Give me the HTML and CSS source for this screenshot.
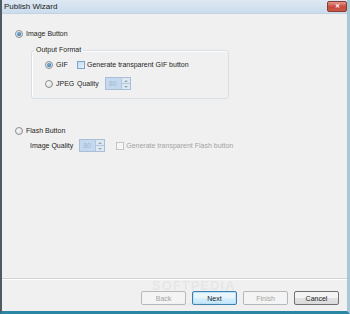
FILE: index.html
```html
<!DOCTYPE html>
<html lang="en">
<head>
    <meta charset="UTF-8">
    <title>Publish Wizard</title>
    <link rel="stylesheet" href="styles.css">
</head>
<body>
    <div class="window">
        <div class="titlebar">
            <span class="title">Publish Wizard</span>
            <span class="close">&#x2715;</span>
        </div>

        <div class="content">
            <div class="row">
                <span class="radio checked"></span>
                <span>Image Button</span>
            </div>

            <fieldset class="group">
                <legend>Output Format</legend>
                <div class="group-inner">
                    <div class="row">
                        <span class="radio checked"></span>
                        <span class="opt-label">GIF</span>
                        <span class="check"></span>
                        <span>Generate transparent GIF button</span>
                    </div>
                    <div class="row row-spin">
                        <span class="radio"></span>
                        <span class="opt-label">JPEG</span>
                        <span class="quality-label">Quality</span>
                        <span class="spin">
                            <span class="spin-value">80</span>
                            <span class="spin-arrows">
                                <span class="arrow up"></span>
                                <span class="arrow down"></span>
                            </span>
                        </span>
                    </div>
                </div>
            </fieldset>

            <div class="row flash-row">
                <span class="radio"></span>
                <span>Flash Button</span>
            </div>

            <div class="row row-spin quality-row">
                <span class="quality-label">Image Quality</span>
                <span class="spin">
                    <span class="spin-value">80</span>
                    <span class="spin-arrows">
                        <span class="arrow up"></span>
                        <span class="arrow down"></span>
                    </span>
                </span>
                <span class="check disabled"></span>
                <span class="muted">Generate transparent Flash button</span>
            </div>
        </div>

        <div class="separator"></div>

        <div class="footer">
            <button class="btn" disabled>Back</button>
            <button class="btn default">Next</button>
            <button class="btn" disabled>Finish</button>
            <button class="btn">Cancel</button>
            <div class="watermark">SOFTPEDIA<small>www.softpedia.com</small></div>
        </div>
    </div>
</body>
</html>
```

FILE: styles.css
```css
:root {
    --face: #f0f0f0;
    --text: #1e1e1e;
    --muted: #a3a3a3;
    --spin-bg: #c4d9ef;
}

html, body {
    margin: 0;
    padding: 0;
}

body {
    width: 350px;
    height: 314px;
    overflow: hidden;
    font-family: 'Liberation Sans', Arial, sans-serif;
    font-size: 7px;
    color: var(--text);
    background: var(--face);
}

.window {
    position: relative;
    width: 350px;
    height: 314px;
    box-sizing: border-box;
    display: flex;
    flex-direction: column;
    background: var(--face);
    border-left: 2px solid #4e5c62;
    border-right: 3px solid #a9c7d9;
    border-bottom: 3px solid #2a86a3;
}

.titlebar {
    height: 14px;
    display: flex;
    align-items: center;
    justify-content: space-between;
    padding: 0 0 0 2px;
    background: linear-gradient(#dde8f3, #ccdcec);
    border-bottom: 1px solid #c2d3e3;
    box-sizing: border-box;
}

.title {
    font-size: 8px;
    color: #1a1a1a;
}

.close {
    width: 18px;
    height: 9px;
    margin-top: -1px;
    border: 1px solid #8a3a33;
    border-radius: 2px;
    background: linear-gradient(#e39a8c, #c8493c 55%, #c65a48);
    color: #fff;
    font-size: 6px;
    font-weight: bold;
    line-height: 9px;
    text-align: center;
}

.content {
    flex: 1;
    padding: 16px 0 0 13px;
}

.row {
    display: flex;
    align-items: center;
    height: 8px;
    line-height: 8px;
    white-space: nowrap;
}

.row-spin {
    height: 13px;
}

.radio {
    width: 6px;
    height: 6px;
    margin-right: 3px;
    border: 1px solid #8c8f94;
    border-radius: 50%;
    background: radial-gradient(circle at 35% 35%, #fbfbfb, #d4d4d4);
    display: flex;
    align-items: center;
    justify-content: center;
    flex: none;
}

.radio.checked::after {
    content: "";
    width: 4px;
    height: 4px;
    border-radius: 50%;
    background: radial-gradient(circle at 40% 40%, #6fb4e6, #1b5b94);
}

.group {
    width: 198px;
    margin: 8px 0 0 16px;
    padding: 0;
    box-sizing: border-box;
    border: 1px solid #d5dfe5;
    border-radius: 3px;
    box-shadow: inset 1px 1px 0 #fff;
}

.group legend {
    margin-left: 2px;
    padding: 0 2px;
    line-height: 8px;
}

.group-inner {
    padding: 7px 0 8px 13px;
}

.group-inner .row-spin {
    margin-top: 8px;
}

.opt-label {
    width: 21px;
}

.check {
    width: 6px;
    height: 6px;
    margin-right: 2px;
    border: 1px solid #7fa6c6;
    background: linear-gradient(135deg, #bfdcf4, #e6f2fb);
    flex: none;
}

.check.disabled {
    border-color: #c5c5c5;
    background: #f6f6f6;
}

.quality-label {
    margin-right: 6px;
}

.spin {
    width: 26px;
    height: 13px;
    box-sizing: border-box;
    display: flex;
    border: 1px solid #a9bfd8;
    background: var(--spin-bg);
}

.spin-value {
    flex: 1;
    padding-left: 3px;
    color: #9fb7d1;
    line-height: 11px;
}

.spin-arrows {
    width: 8px;
    display: flex;
    flex-direction: column;
    border-left: 1px solid #b3c6da;
}

.arrow {
    flex: 1;
    display: flex;
    align-items: center;
    justify-content: center;
    background: #dde8f2;
}

.arrow.up {
    border-bottom: 1px solid #b3c6da;
}

.arrow::after {
    content: "";
    border-left: 2px solid transparent;
    border-right: 2px solid transparent;
}

.arrow.up::after {
    border-bottom: 2px solid #9aa9b8;
}

.arrow.down::after {
    border-top: 2px solid #9aa9b8;
}

.flash-row {
    margin-top: 28px;
}

.quality-row {
    margin: 4px 0 0 15px;
}

.quality-row .check {
    margin-left: 11px;
}

.muted {
    color: var(--muted);
}

.separator {
    height: 1px;
    background: #d3d3d3;
    border-bottom: 1px solid #fff;
}

.footer {
    position: relative;
    display: flex;
    justify-content: flex-end;
    gap: 6px;
    padding: 11px 8px 6px 0;
}

.btn {
    width: 45px;
    height: 14px;
    padding: 0;
    font-family: inherit;
    font-size: 7px;
    color: var(--text);
    border: 1px solid #707070;
    border-radius: 2px;
    background: linear-gradient(#f4f4f4 50%, #e2e2e2 50%, #dadada);
}

.btn:disabled {
    color: var(--muted);
    border-color: #b4b8bb;
    background: #f4f4f4;
}

.btn.default {
    border-color: #3c7fb1;
    box-shadow: inset 0 0 0 1px #bfe2f6;
    background: linear-gradient(#eaf6fd 50%, #d9f0fc 50%, #bee6fd);
}

.watermark {
    position: absolute;
    left: 150px;
    top: -1px;
    font-size: 13px;
    font-weight: bold;
    letter-spacing: 1px;
    color: rgba(180, 180, 180, 0.18);
    line-height: 14px;
    text-align: center;
    pointer-events: none;
}

.watermark small {
    display: block;
    font-size: 6px;
    font-weight: normal;
    letter-spacing: 0;
    line-height: 22px;
}
```
